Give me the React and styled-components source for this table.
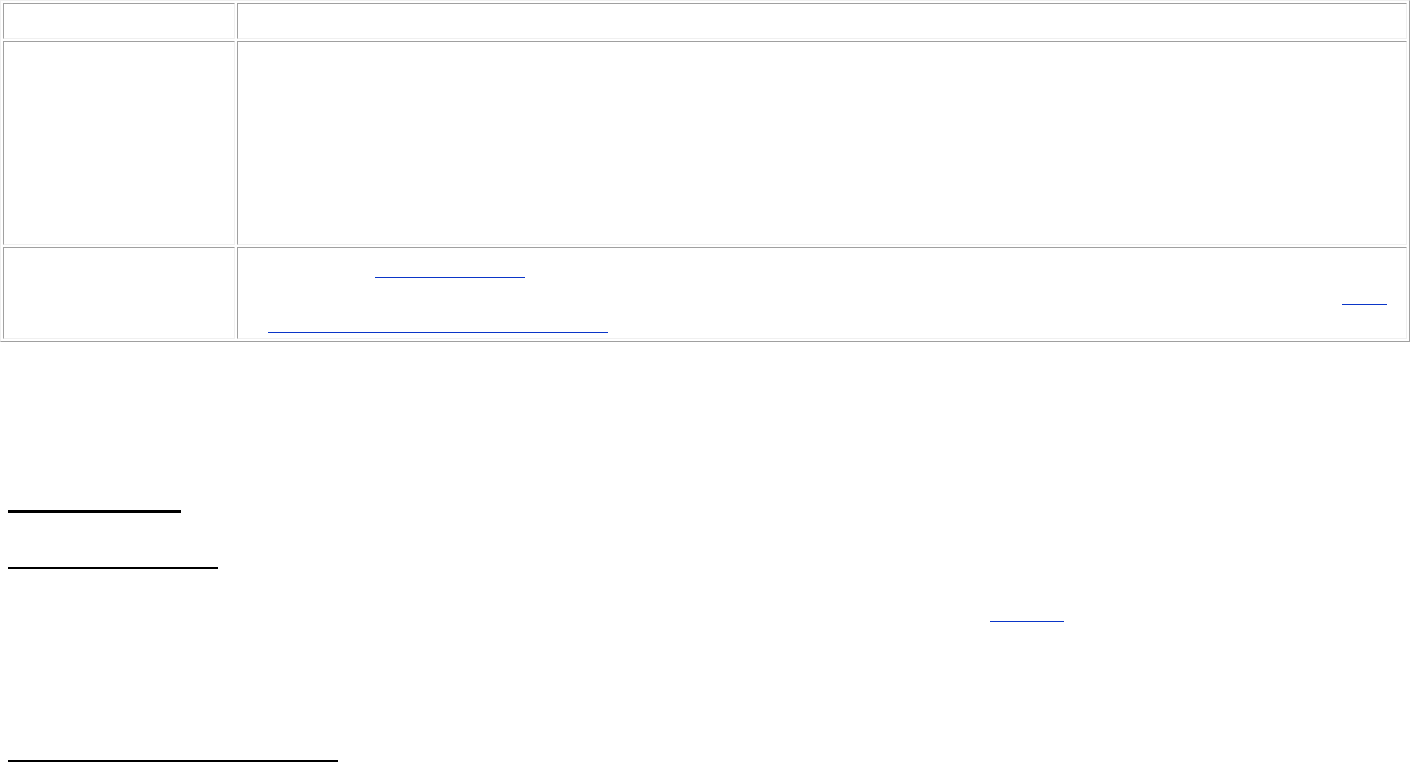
import React from 'react';
import styled, { createGlobalStyle } from 'styled-components';

const GlobalStyle = createGlobalStyle`
  body {
    margin: 0;
    background: #ffffff;
    font-family: 'Liberation Sans', Arial, sans-serif;
    font-size: 13px;
    color: #ffffff;
  }
`;

const Page = styled.div`
  width: 1410px;
`;

const Table = styled.table`
  width: 1410px;
  border-collapse: separate;
  border-spacing: 2px;
  border-style: solid;
  border-width: 1px;
  border-color: #f0f0f0 #a0a0a0 #a0a0a0 #f0f0f0;
`;

const Cell = styled.td`
  box-sizing: border-box;
  padding: 0;
  vertical-align: top;
  height: ${({ $h }) => $h}px;
  width: ${({ $w }) => ($w ? `${$w}px` : 'auto')};
  border-style: solid;
  border-width: 1px;
  border-color: #a0a0a0 #f0f0f0 #f0f0f0 #a0a0a0;
  color: #ffffff;
`;

const Line = styled.div`
  display: flex;
  align-items: flex-end;
  height: ${({ $h }) => $h}px;
  padding-left: ${({ $indent }) => $indent || 0}px;
  white-space: nowrap;
  overflow: hidden;
`;

// text before a link: fixed width so the link lands where it does on the page
const Lead = styled.span`
  display: inline-block;
  flex: none;
  width: ${({ $w }) => $w}px;
  overflow: hidden;
  line-height: 15px;
`;

const Link = styled.a`
  display: inline-block;
  flex: none;
  box-sizing: border-box;
  width: ${({ $w }) => $w}px;
  border-bottom: 1px solid #0b36c8;
  color: #ffffff;
  text-decoration: none;
  overflow: hidden;
  white-space: nowrap;
  line-height: 15px;
`;

const Body = styled.div`
  padding: 0 8px;
`;

const Heading = styled.h3`
  box-sizing: content-box;
  margin: ${({ $top }) => $top}px 0 0 0;
  width: ${({ $w }) => $w}px;
  height: ${({ $h }) => $h}px;
  border-bottom: ${({ $t }) => $t}px solid #000000;
  color: #ffffff;
  font-size: 16px;
  font-weight: bold;
  line-height: ${({ $h }) => $h}px;
  overflow: hidden;
  white-space: nowrap;
`;

const Para = styled(Line)`
  margin-top: ${({ $top }) => $top}px;
`;

export default function App() {
  return (
    <Page>
      <GlobalStyle />
      <Table>
        <tbody>
          <tr>
            <Cell $w={232} $h={36}>Name</Cell>
            <Cell $h={36}>Description</Cell>
          </tr>
          <tr>
            <Cell $h={204}>Details</Cell>
            <Cell $h={204}>Overview</Cell>
          </tr>
          <tr>
            <Cell $h={92}>See also</Cell>
            <Cell $h={92}>
              <Line $h={30}>
                <Lead $w={137}>Refer to</Lead>
                <Link href="#" $w={150}>related document</Link>
              </Line>
              <Line $h={27}>
                <Lead $w={1104}>For further information on this topic, please visit</Lead>
                <Link href="#" $w={45}>the</Link>
              </Line>
              <Line $h={28} $indent={30}>
                <Link href="#" $w={340}>reference page for this component</Link>
              </Line>
            </Cell>
          </tr>
        </tbody>
      </Table>
      <Body>
        <Heading $top={141} $w={173} $h={27} $t={3}>Introduction</Heading>
        <Heading $top={26} $w={210} $h={28} $t={2}>Getting started</Heading>
        <Para $top={23} $h={30}>
          <Lead $w={982}>Additional notes</Lead>
          <Link href="#" $w={74}>more</Link>
        </Para>
        <Heading $top={111} $w={330} $h={27} $t={3}>Frequently asked questions</Heading>
      </Body>
    </Page>
  );
}
